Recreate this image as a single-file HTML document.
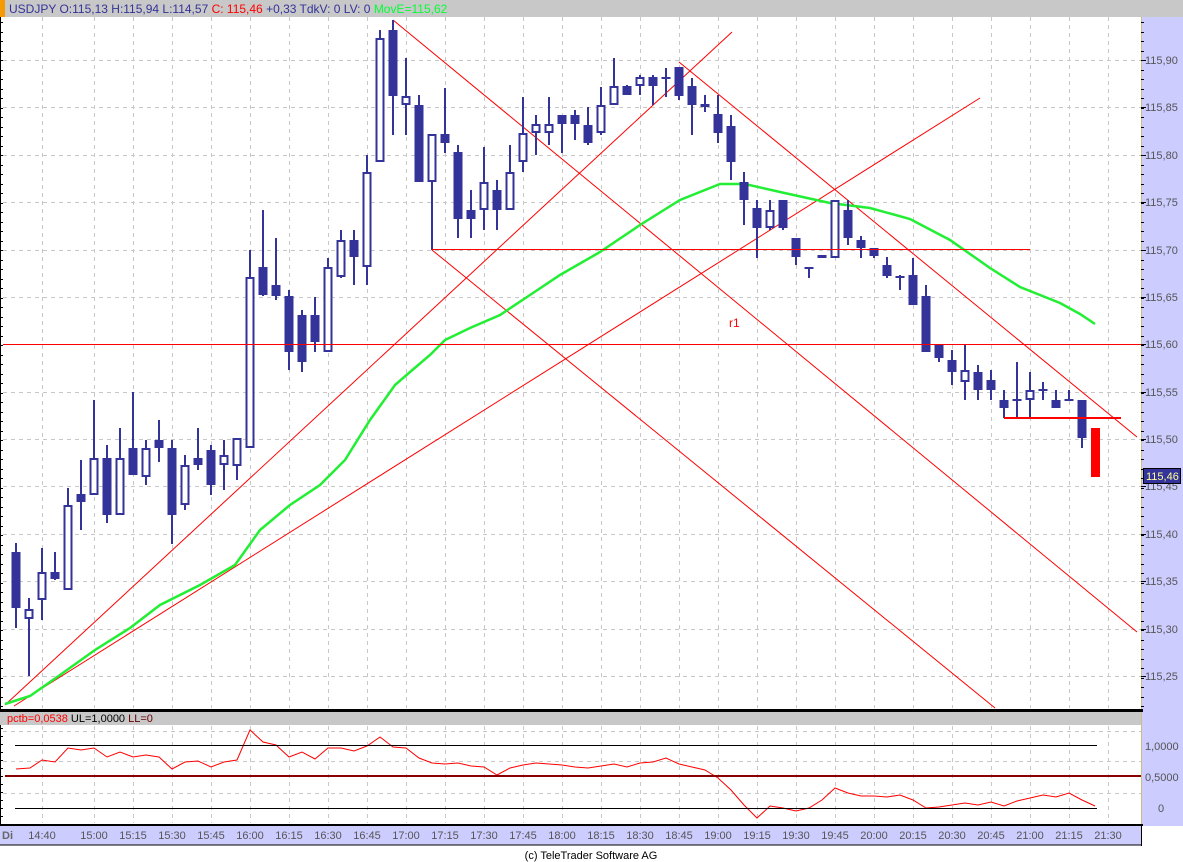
<!DOCTYPE html>
<html><head><meta charset="utf-8"><style>
html,body{margin:0;padding:0;background:#fff;width:1183px;height:862px;overflow:hidden}
svg{display:block;font-family:"Liberation Sans",sans-serif}
</style></head><body>
<svg id="s" width="1183" height="862" xmlns="http://www.w3.org/2000/svg">
<rect x="0" y="0" width="1183" height="862" fill="#fff"/>
<rect x="0" y="0" width="1183" height="17" fill="#c8c8c8"/>
<rect x="0" y="0" width="5" height="17" fill="#f59a00"/>
<text x="9" y="13" font-size="12" fill="#333399">USDJPY O:115,13 H:115,94 L:114,57 <tspan fill="#ff0000">C: 115,46</tspan> +0,33 TdkV: 0 LV: 0 <tspan fill="#00ff33">MovE=115,62</tspan></text>
<rect x="1141" y="17" width="42" height="809" fill="#ccccff"/>
<line x1="1141.5" y1="17" x2="1141.5" y2="826" stroke="#c8c080" stroke-width="1"/>
<g id="grid" shape-rendering="crispEdges"></g>
<g id="draw"></g>
<g id="hl" shape-rendering="crispEdges"></g>
<rect x="0" y="709" width="1143" height="3" fill="#000"/>
<rect x="0" y="712" width="1141" height="13" fill="#c8c8c8"/>
<text x="7" y="722" font-size="11" fill="#ff0000">pctb=0,0538 <tspan fill="#000">UL=1,0000</tspan> <tspan fill="#660000">LL=0</tspan></text>
<rect x="0" y="824" width="1143" height="2" fill="#000"/>
<rect x="0" y="826" width="1141" height="19" fill="#ccccff"/>
<line x1="0" y1="845" x2="1141" y2="845" stroke="#000"/>
<line x1="1141.5" y1="826" x2="1141.5" y2="846" stroke="#000"/>
<text x="2" y="839" font-size="11" font-weight="bold" fill="#666">Di</text>
<g id="tl" font-size="11" fill="#555"></g>
<text x="591" y="859" font-size="11" fill="#000" text-anchor="middle">(c) TeleTrader Software AG</text>
</svg>
<script>
var NS="http://www.w3.org/2000/svg";
function el(p,t,a,txt){var e=document.createElementNS(NS,t);for(var k in a)e.setAttribute(k,a[k]);if(txt!=null)e.textContent=txt;document.getElementById(p).appendChild(e);return e;}
var xs=[42];for(var i=0;i<27;i++)xs.push(94+39*i);
xs.forEach(function(x){el('grid','line',{x1:x+.5,y1:17,x2:x+.5,y2:708,stroke:'#c8c8c8','stroke-dasharray':'4,4'});
el('grid','line',{x1:x+.5,y1:726,x2:x+.5,y2:823,stroke:'#c8c8c8','stroke-dasharray':'4,4'});});
var labs=["14:40","15:00","15:15","15:30","15:45","16:00","16:15","16:30","16:45","17:00","17:15","17:30","17:45","18:00","18:15","18:30","18:45","19:00","19:15","19:30","19:45","20:00","20:15","20:30","20:45","21:00","21:15","21:30"];
labs.forEach(function(l,i){el('tl','text',{x:xs[i],y:839,'text-anchor':'middle'},l);});
var pl=["115,90","115,85","115,80","115,75","115,70","115,65","115,60","115,55","115,50","115,45","115,40","115,35","115,30","115,25"];
pl.forEach(function(l,i){var y=Math.round(60+i*47.385);
el('grid','line',{x1:3,y1:y+.5,x2:1141,y2:y+.5,stroke:'#c8c8c8','stroke-dasharray':'4,4'});
el('grid','line',{x1:1141,y1:y+.5,x2:1146,y2:y+.5,stroke:'#000'});
el('grid','text',{x:1145,y:y+4,'font-size':11,fill:'#555'},l);});
for(var y=22;y<708;y+=9.5){el('grid','line',{x1:0,y1:Math.round(y)+.5,x2:3,y2:Math.round(y)+.5,stroke:'#000'});el('grid','line',{x1:1141,y1:Math.round(y)+.5,x2:1144,y2:Math.round(y)+.5,stroke:'#000'});}
for(var y=728;y<824;y+=8){el('grid','line',{x1:0,y1:y+.5,x2:3,y2:y+.5,stroke:'#000'});}
el('grid','line',{x1:0.5,y1:17,x2:0.5,y2:845,stroke:'#000'});
[731,761,793].forEach(function(y){el('grid','line',{x1:3,y1:y+.5,x2:1141,y2:y+.5,stroke:'#c8c8c8','stroke-dasharray':'4,4'});});
el('grid','text',{x:1145,y:750,'font-size':11,fill:'#555'},"1,0000");
el('grid','text',{x:1145,y:781,'font-size':11,fill:'#555'},"0,5000");
el('grid','text',{x:1158,y:812,'font-size':11,fill:'#555'},"0");
el('hl','line',{x1:15,y1:745.5,x2:1097,y2:745.5,stroke:'#000'});
el('hl','line',{x1:5,y1:776,x2:1141,y2:776,stroke:'#880000','stroke-width':2});
el('hl','line',{x1:15,y1:808.5,x2:1097,y2:808.5,stroke:'#000'});
var L=[[5,705,732,32],[14,706,980,98],[393,20,1137,632],[679,62,1137,437],[432,250,995,708]];
L.forEach(function(a){el('draw','line',{x1:a[0],y1:a[1],x2:a[2],y2:a[3],stroke:'#ff0000','stroke-width':1});});
el('hl','line',{x1:432,y1:249.5,x2:1030,y2:249.5,stroke:'#ff0000'});
el('hl','line',{x1:3,y1:344.5,x2:1141,y2:344.5,stroke:'#ff0000'});
el('hl','line',{x1:1004,y1:418,x2:1121,y2:418,stroke:'#ff0000','stroke-width':2});
el('draw','text',{x:729,y:327,'font-size':12,fill:'#ff0000'},"r1");
var ma=[[5,704],[30,696],[60,675],[95,650],[130,628],[160,605],[200,585],[235,565],[260,530],[290,505],[320,485],[345,460],[370,420],[395,385],[410,372],[430,355],[445,340],[470,328],[500,315],[530,295],[560,275],[600,252],[640,225],[680,200],[720,184],[745,184],[780,192],[830,203],[870,208],[910,219],[950,240],[990,268],[1020,287],[1060,303],[1080,314],[1095,324]];
el('draw','polyline',{points:ma.map(function(p){return p.join(',')}).join(' '),fill:'none',stroke:'#22ee33','stroke-width':2.5});
var C=[[16,543,628,552,608,1],[29,598,676,609,619,0],[42,548,620,572,600,0],[55,552,580,572,579,1],[68,488,590,505,590,0],[81,460,530,494,502,1],[94,400,495,458,495,0],[107,445,523,458,515,1],[120,428,515,458,515,0],[133,392,475,448,475,1],[146,440,485,448,477,0],[159,420,462,440,448,1],[172,440,544,448,515,1],[185,455,510,465,505,0],[198,428,470,458,465,1],[211,445,495,450,485,1],[224,440,490,455,465,0],[237,440,480,438,466,0],[250,250,448,277,448,0],[263,210,296,267,295,1],[276,238,300,285,296,1],[289,290,370,296,352,1],[302,310,372,315,362,1],[315,297,352,315,342,1],[328,258,352,267,352,0],[341,230,278,240,277,0],[354,230,285,240,257,1],[367,155,285,172,267,0],[380,30,162,38,162,0],[393,20,135,30,96,1],[406,58,135,96,105,0],[419,95,182,105,182,1],[432,134,250,134,182,0],[445,88,153,134,143,1],[458,145,238,152,219,1],[471,190,238,210,219,1],[484,147,230,182,210,0],[497,180,230,190,210,1],[510,145,210,172,210,0],[523,97,172,133,162,0],[536,115,155,124,133,0],[549,97,145,124,133,0],[562,115,153,115,124,1],[575,110,140,115,124,1],[588,107,145,125,143,1],[601,87,135,105,133,0],[614,58,105,86,105,0],[627,85,95,86,95,1],[640,75,95,77,86,0],[653,75,105,77,86,1],[666,68,97,77,79,1],[679,67,100,67,96,1],[692,78,135,86,105,1],[705,95,112,104,107,1],[718,95,143,114,133,1],[731,115,180,126,162,1],[744,172,225,182,200,1],[757,200,258,208,228,1],[770,200,230,210,228,0],[783,200,230,200,228,1],[796,238,265,238,257,1],[809,267,278,267,269,1],[822,255,258,255,258,1],[835,200,258,200,258,0],[848,200,245,210,238,1],[861,236,258,240,248,1],[874,248,258,248,256,1],[887,257,278,265,276,1],[900,275,290,276,278,1],[913,258,305,275,305,1],[926,285,352,296,352,1],[939,345,362,345,358,1],[952,350,385,360,372,1],[965,345,400,370,382,0],[978,365,400,372,390,1],[991,370,400,380,390,1],[1004,390,418,400,408,1],[1017,362,418,399,401,1],[1030,372,418,390,400,0],[1043,382,400,389,391,1],[1056,390,408,400,408,1],[1069,390,400,399,401,1],[1082,400,448,400,438,1]];
C.forEach(function(c){var x=c[0];
el('draw','line',{x1:x,y1:c[1],x2:x,y2:c[2],stroke:'#333399','stroke-width':2});
if(c[5])el('draw','rect',{x:x-4.5,y:c[3],width:9,height:Math.max(2,c[4]-c[3]),fill:'#333399'});
else el('draw','rect',{x:x-3.5,y:c[3]+1,width:7,height:Math.max(1,c[4]-c[3]-2),fill:'#fff',stroke:'#333399','stroke-width':2});});
el('draw','rect',{x:1091,y:428,width:9,height:49,fill:'#ff0000'});
var P=[[16,769],[30,768],[42,760],[55,762],[68,748],[81,750],[94,748],[107,757],[120,752],[133,757],[146,755],[159,757],[172,769],[185,762],[198,761],[211,767],[224,762],[237,760],[250,730],[263,742],[276,745],[289,757],[302,752],[315,759],[328,748],[341,748],[354,751],[367,746],[380,737],[393,747],[406,748],[419,758],[432,763],[445,764],[458,763],[471,766],[484,767],[497,775],[510,768],[523,765],[536,763],[549,764],[562,765],[575,767],[588,768],[601,766],[614,764],[627,767],[640,763],[653,762],[666,758],[679,764],[692,767],[705,770],[718,778],[731,790],[744,805],[757,818],[770,806],[783,808],[796,811],[809,808],[822,800],[835,788],[848,793],[861,796],[874,796],[887,797],[900,795],[913,800],[926,808],[939,807],[952,805],[965,803],[978,805],[991,802],[1004,806],[1017,801],[1030,798],[1043,795],[1056,797],[1069,793],[1082,800],[1095,806]];
el('draw','polyline',{points:P.map(function(p){return p.join(',')}).join(' '),fill:'none',stroke:'#ff0000','stroke-width':1});
el('draw','rect',{x:1143.5,y:468.5,width:37,height:15,fill:'#333399',stroke:'#000'});
el('draw','text',{x:1146,y:480,'font-size':11,fill:'#ffff99'},"115,46");
</script>
</body></html>
